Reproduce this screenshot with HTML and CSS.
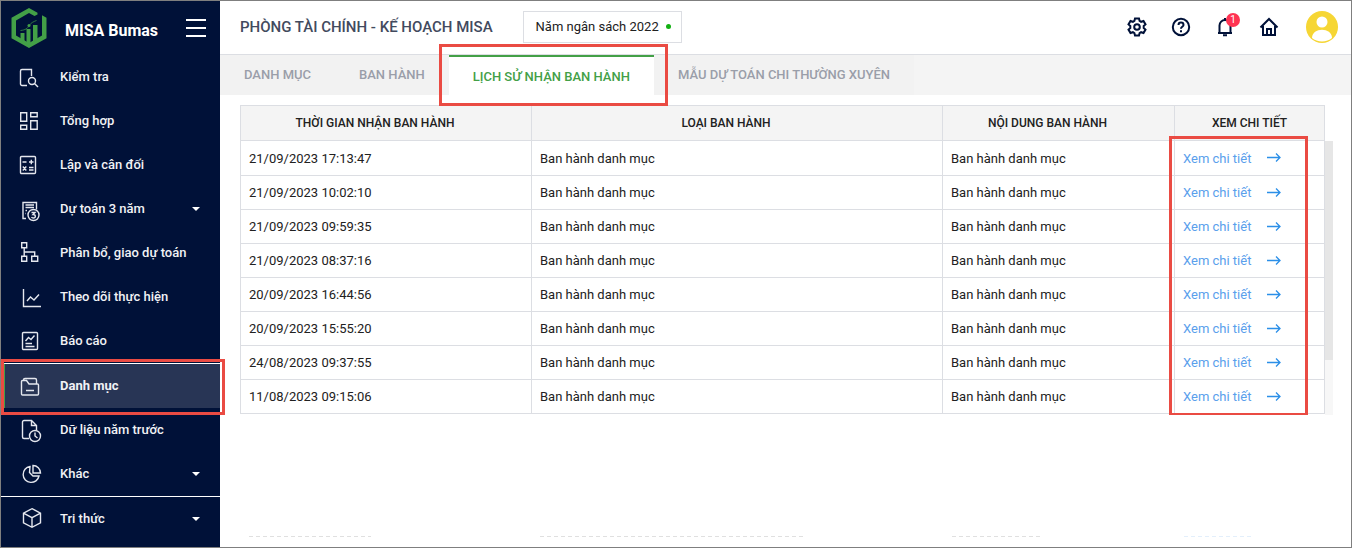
FILE: index.html
```html
<!DOCTYPE html>
<html lang="vi">
<head>
  <meta charset="UTF-8" />
  <meta name="viewport" content="width=device-width, initial-scale=1.0"/>
  <title>MISA Bumas</title>
  <link rel="stylesheet" href="styles.css">
</head>
<body>

  <aside class="sidebar">
    <div class="brand">
      <svg class="logo" width="36" height="40" viewBox="0 0 36 40">
        <path d="M26.500 4.700 18 0 .5 9.800v20.400L18 40l17.500-9.800V9.800L31 7.300v20.300L18 35 5 27.600V12.400L18 5l5.500 3.100 3-1.600z" fill="#43a047"/>
        <path d="M9.500 25h4v9l-4-2.300zM15.500 21h4v15l-2 1-2-1zM22 17h4.500v14.500L22 34z" fill="#43a047"/>
        <path d="M9.500 22.500c5-.5 7-2 8.500-4.800 2-3.200 5-4.200 7.500-5.200" fill="none" stroke="#43a047" stroke-width=".7"/>
        <circle cx="18" cy="17.500" r="1.500" fill="#43a047"/>
      </svg>
      <span class="brand-name">MISA Bumas</span>
      <button class="menu-btn" aria-label="Menu">
        <svg width="20" height="18" viewBox="0 0 20 18"><path d="M0 1h20M0 9h20M0 17h20" stroke="#fff" stroke-width="2"/></svg>
      </button>
    </div>

    <nav class="nav">
      <a href="#" class="nav-item">
        <svg class="nav-icon" viewBox="0 0 22 22"><path d="M7 19.500H2A1.500 1.500 0 0 1 .5 18V5A1.500 1.500 0 0 1 2 3.500h9.500V10"/><circle cx="12" cy="15" r="3.500"/><path d="m14.500 17.500 3.500 3.500"/></svg>
        <span class="nav-label">Kiểm tra</span>
      </a>
      <a href="#" class="nav-item">
        <svg class="nav-icon" viewBox="0 0 22 22"><path d="M.7 2.700h6v8.500h-6zM10.700 2.700h6.500v4h-6.500zM10.700 10.700h6.500v8.500h-6.500zM.7 15.200h6v4h-6z"/></svg>
        <span class="nav-label">Tổng hợp</span>
      </a>
      <a href="#" class="nav-item">
        <svg class="nav-icon" viewBox="0 0 22 22"><rect x=".5" y="2.500" width="15" height="17" rx="1"/><path d="M2.500 8h4M9 8h4.500M11.300 5.700v4.600M2.800 12.500l3.500 4M6.300 12.500l-3.500 4M9 13.500h4.500M9 16h4.500"/></svg>
        <span class="nav-label">Lập và cân đối</span>
      </a>
      <a href="#" class="nav-item">
        <svg class="nav-icon" viewBox="0 0 22 22"><path d="M6 20.500H3v-16h13.500v7M5.500 7h8.500M5.500 9.500h8.500M5.500 12.500H7M5.500 15.500H6"/><circle cx="13.500" cy="17" r="5.500"/><path d="M11.500 14.500h3.500l-2 2c3 0 3 3.500.5 3.500-1 0-1.700-.4-2-1"/></svg>
        <span class="nav-label">Dự toán 3 năm</span>
        <i class="caret"></i>
      </a>
      <a href="#" class="nav-item">
        <svg class="nav-icon" viewBox="0 0 22 22"><path d="M1.700.7h5v5h-5zM1.700 14.200h5v5h-5zM11.700 14.200h6v5h-6zM4.200 5.700v8.500M4.200 10h10.500v4.200"/></svg>
        <span class="nav-label">Phân bổ, giao dự toán</span>
      </a>
      <a href="#" class="nav-item">
        <svg class="nav-icon" viewBox="0 0 22 22"><path d="M3.500 3v17.500H21M7 15l3.500-4 3.500 3 5-5.500"/></svg>
        <span class="nav-label">Theo dõi thực hiện</span>
      </a>
      <a href="#" class="nav-item">
        <svg class="nav-icon" viewBox="0 0 22 22"><rect x="2.500" y="2.500" width="15" height="17" rx="1"/><path d="m5.500 11 3-3.500L11 9.500l3.500-4M5.500 13.500H12M5.500 16.500h9"/></svg>
        <span class="nav-label">Báo cáo</span>
      </a>
      <a href="#" class="nav-item active" aria-current="page">
        <svg class="nav-icon" viewBox="0 0 22 22"><path d="M1.500 19V6.500c0-.6.400-1 1-1h4L9 9h8.500c.6 0 1 .4 1 1v9c0 .6-.4 1-1 1h-15c-.6 0-1-.4-1-1zM3.500 5.500V5c0-.8.500-1.500 1.500-1.500h10c1 0 1.500.7 1.500 1.500v4M6 15.500h8"/></svg>
        <span class="nav-label">Danh mục</span>
      </a>
      <a href="#" class="nav-item">
        <svg class="nav-icon" viewBox="0 0 22 22"><path d="M9 19.500H4A1.500 1.500 0 0 1 2.500 18V3A1.500 1.500 0 0 1 4 1.500h7.500l5 5V11M11.500 1.500v5h5"/><circle cx="15" cy="17" r="5.500"/><path d="M15 13.500V17l2.500 2"/></svg>
        <span class="nav-label">Dữ liệu năm trước</span>
      </a>
      <a href="#" class="nav-item">
        <svg class="nav-icon" viewBox="0 0 22 22"><path d="M10 3.500a8 8 0 1 0 9 9.500h-6L9.500 9.500z"/><path d="M13 2.500a7.500 7.500 0 0 1 7.500 7.500H13z"/></svg>
        <span class="nav-label">Khác</span>
        <i class="caret"></i>
      </a>
      <a href="#" class="nav-item divided">
        <svg class="nav-icon" viewBox="0 0 22 22"><path d="m12 .7 8.500 4.500v9.600L12 19.300l-8.500-4.500V5.200zM3.500 5.200 12 9.700l8.500-4.500M12 9.700v9.600"/></svg>
        <span class="nav-label">Tri thức</span>
        <i class="caret"></i>
      </a>
    </nav>
  </aside>

  <main class="main">
    <header class="topbar">
      <h1 class="title">PHÒNG TÀI CHÍNH - KẾ HOẠCH MISA</h1>
      <button class="year-btn">Năm ngân sách 2022 <i class="dot"></i></button>

      <div class="tools">
        <button class="icon-btn" aria-label="Cài đặt">
          <svg width="20" height="20" viewBox="0 0 20 20"><path d="M8 1.500h4l.6 2.400 1.500.9 2.400-.8 2 3.400L16.700 9v2l1.800 1.600-2 3.400-2.400-.8-1.500.9-.6 2.400H8l-.6-2.400-1.500-.9-2.400.8-2-3.400L3.300 11V9L1.500 7.400l2-3.400 2.400.8 1.500-.9z"/><circle cx="10" cy="10" r="2.800"/></svg>
        </button>
        <button class="icon-btn" aria-label="Trợ giúp">
          <svg width="20" height="20" viewBox="0 0 20 20"><circle cx="10" cy="10" r="8.200"/><path d="M7.500 8c0-3.300 5-3.300 5 0 0 1.800-2.500 1.800-2.500 3.700M10 13.300v1.900"/></svg>
        </button>
        <button class="icon-btn" aria-label="Thông báo">
          <svg width="20" height="20" viewBox="0 0 20 20"><path d="M3 16h14M4.500 16V8.500a5.500 5.500 0 0 1 11 0V16M10 1v2M8 18.300h4"/></svg>
          <span class="badge">1</span>
        </button>
        <button class="icon-btn" aria-label="Trang chủ">
          <svg width="20" height="20" viewBox="0 0 20 20"><path d="m1.500 10.500 8.500-8.500 8.500 8.500M4 9v9h12V9M8 18v-6h4v6"/></svg>
        </button>
        <button class="avatar" aria-label="Tài khoản">
          <svg width="32" height="32" viewBox="0 0 32 32"><circle cx="16" cy="16" r="16" fill="#f6d634"/><circle cx="16" cy="11" r="5.500" fill="#fff"/><path d="M6 27c0-11 20-11 20 0-5 4.500-15 4.500-20 0z" fill="#fff"/></svg>
        </button>
      </div>
    </header>

    <nav class="tabs">
      <a href="#" class="tab">DANH MỤC</a>
      <a href="#" class="tab">BAN HÀNH</a>
      <a href="#" class="tab active">LỊCH SỬ NHẬN BAN HÀNH</a>
      <a href="#" class="tab">MẪU DỰ TOÁN CHI THƯỜNG XUYÊN</a>
    </nav>

    <section class="grid-wrap">
      <table class="grid">
        <colgroup><col class="c-time"><col><col class="c-content"><col class="c-detail"></colgroup>
        <thead>
          <tr>
            <th>THỜI GIAN NHẬN BAN HÀNH</th>
            <th>LOẠI BAN HÀNH</th>
            <th>NỘI DUNG BAN HÀNH</th>
            <th>XEM CHI TIẾT</th>
          </tr>
        </thead>
        <tbody id="rows"></tbody>
      </table>
      <div class="scrollbar"><div class="thumb"></div></div>
      <div class="mark-detail"></div>
    </section>

    <!-- faint trace of the next row at the fold -->
    <div class="peek">
      <i class="peek-time"></i>
      <i class="peek-type"></i>
      <i class="peek-content"></i>
      <i class="peek-link"></i>
    </div>
  </main>

  <script src="script.js"></script>
</body>
</html>
```

FILE: styles.css
```css
:root {
  --navy: #001138;
  --green: #43a047;
  --line: #dcdee3;
  --red: #ea4b43;
  --link: #5aa0ec;
}

* {
  box-sizing: border-box;
}

body {
  margin: 0;
  min-height: 100vh;
  display: flex;
  border: 1px solid #7f7f7f;
  background: #fff;
  color: #212121;
  font-family: Roboto, sans-serif;
  font-size: 13px;
}

a {
  text-decoration: none;
}

button {
  font: inherit;
  color: inherit;
  background: none;
  border: 0;
  padding: 0;
  cursor: pointer;
}

svg {
  display: block;
  flex: none;
}

/* sidebar */
.sidebar {
  flex: none;
  width: 219px;
  background: var(--navy);
  color: #fff;
}

.brand {
  height: 54px;
  display: flex;
  align-items: center;
  padding: 0 14px 0 10px;
}

.brand-name {
  flex: 1;
  margin-left: 18px;
  padding-top: 5px;
  font-size: 16px;
  font-weight: 700;
}

.nav-item {
  position: relative;
  height: 44px;
  display: flex;
  align-items: center;
  gap: 18px;
  padding: 0 20px 0 19px;
  color: #f1f2f5;
  font-weight: 500;
}

.nav-icon {
  width: 22px;
  height: 22px;
  overflow: visible;
  fill: none;
  stroke: #e4e7ee;
  stroke-width: 1.4;
}

.nav-label {
  padding-bottom: 2px;
}

.nav-item.active {
  height: 45px;
  padding-left: 15px;
  border-top: 1px solid #fff;
  border-left: 4px solid var(--green);
  background: #283555;
  font-weight: 700;
}

.nav-item.active::after {
  content: "";
  position: absolute;
  z-index: 2;
  top: -5px;
  right: -5px;
  bottom: -7px;
  left: -4px;
  border: 3px solid var(--red);
}

.nav-item.divided {
  height: 45px;
  border-top: 1px solid #fff;
}

.caret {
  margin-left: auto;
  border: 4px solid transparent;
  border-top-color: #fff;
  border-bottom: 0;
}

/* top bar */
.main {
  flex: 1;
  min-width: 0;
  display: flex;
  flex-direction: column;
}

.topbar {
  height: 54px;
  display: flex;
  align-items: center;
  padding: 0 13px 2px 20px;
  border-bottom: 1px solid var(--line);
}

.title {
  margin: 0;
  color: #424a5e;
  font-size: 15px;
  font-weight: 500;
}

.year-btn {
  display: flex;
  align-items: center;
  gap: 7px;
  height: 32px;
  margin-left: 30px;
  padding: 0 10px 0 12px;
  border: 1px solid var(--line);
}

.dot {
  width: 5px;
  height: 5px;
  border-radius: 50%;
  background: #12b012;
}

.tools {
  display: flex;
  align-items: center;
  gap: 24px;
  margin-left: auto;
}

.icon-btn {
  position: relative;
  fill: none;
  stroke: var(--navy);
  stroke-width: 2;
}

.badge {
  position: absolute;
  top: -4px;
  right: -5px;
  width: 14px;
  height: 14px;
  border-radius: 50%;
  background: #ff3352;
  color: #fff;
  font-size: 10px;
  line-height: 14px;
}

.avatar {
  margin-left: 3px;
}

/* tabs */
.tabs {
  display: flex;
  height: 40px;
  background: #f4f4f4;
}

.tab {
  position: relative;
  padding: 0 24px;
  background: #f2f2f2;
  color: #9a9ea9;
  font-weight: 500;
  line-height: 40px;
}

.tab.active {
  border-top: 2px solid var(--green);
  background: #fff;
  color: var(--green);
}

.tab.active::after {
  content: "";
  position: absolute;
  z-index: 2;
  top: -13px;
  right: -14px;
  bottom: -11px;
  left: -10px;
  border: 3px solid var(--red);
}

/* grid */
.grid-wrap {
  position: relative;
  display: flex;
  height: 310px;
  margin: 10px 18px 0 20px;
  overflow: hidden;
}

.grid {
  flex: 1;
  align-self: flex-start;
  table-layout: fixed;
  border-spacing: 0;
}

.c-time {
  width: 292px;
}

.c-content {
  width: 232px;
}

.c-detail {
  width: 150px;
}

.grid th,
.grid td {
  height: 34px;
  padding: 0 8px;
  border-right: 1px solid var(--line);
  border-bottom: 1px solid var(--line);
}

.grid th {
  height: 36px;
  padding-right: 30px;
  border-top: 1px solid var(--line);
  background: #f4f4f4;
  font-size: 12px;
  font-weight: 500;
}

.grid th:last-child {
  padding-right: 8px;
}

.grid th:first-child,
.grid td:first-child {
  border-left: 1px solid var(--line);
}

.grid tbody tr:first-child td {
  height: 35px;
}

.detail-link {
  display: flex;
  align-items: center;
  gap: 16px;
  color: var(--link);
}

.detail-link svg {
  fill: none;
  stroke: #2b8fe8;
  stroke-width: 1.3;
}

.scrollbar {
  flex: none;
  width: 8px;
  margin-top: 36px;
  background: #f7f7f7;
}

.thumb {
  height: 219px;
  background: #e6e6e6;
}

.mark-detail {
  position: absolute;
  top: 31px;
  right: 25px;
  bottom: -1px;
  width: 139px;
  border: 3px solid var(--red);
}

.peek {
  display: grid;
  grid-template-columns: 291px 1fr 232px 150px;
  margin: auto 26px 10px 20px;
}

.peek i {
  height: 1px;
  margin-left: 9px;
  background: repeating-linear-gradient(90deg, #e0e0e0 0 4px, transparent 4px 7px);
}

.peek-time {
  width: 122px;
}

.peek-type {
  width: 263px;
}

.peek-content {
  width: 90px;
}

.peek .peek-link {
  width: 69px;
  background: repeating-linear-gradient(90deg, #e3effb 0 4px, transparent 4px 7px);
}
```

FILE: script.js
```js
const times = [
  "21/09/2023 17:13:47",
  "21/09/2023 10:02:10",
  "21/09/2023 09:59:35",
  "21/09/2023 08:37:16",
  "20/09/2023 16:44:56",
  "20/09/2023 15:55:20",
  "24/08/2023 09:37:55",
  "11/08/2023 09:15:06"
];

document.getElementById("rows").innerHTML = times.map(time => `
  <tr>
    <td>${time}</td>
    <td>Ban hành danh mục</td>
    <td>Ban hành danh mục</td>
    <td>
      <a href="#" class="detail-link">Xem chi tiết
        <svg width="14" height="10" viewBox="0 0 14 10"><path d="M0 4.500h13M9 .5l4 4-4 4"/></svg>
      </a>
    </td>
  </tr>
`).join("");
```
